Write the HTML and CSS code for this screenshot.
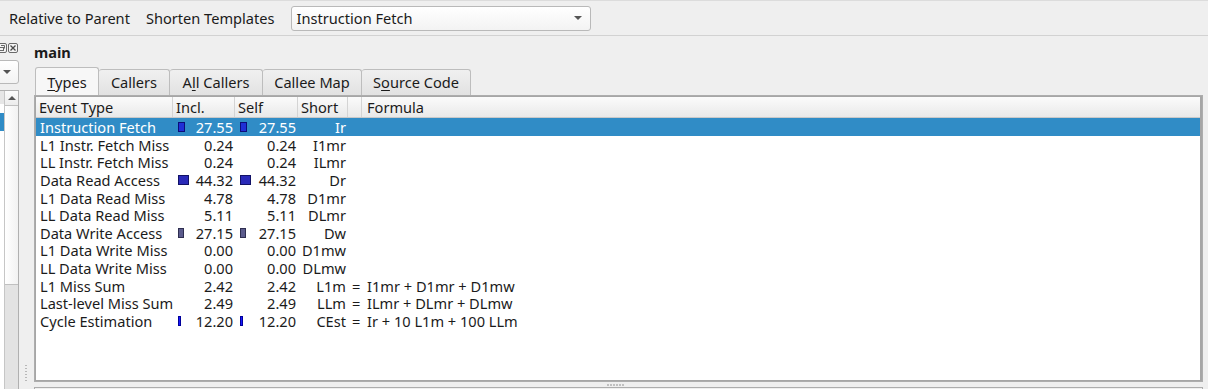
FILE: index.html
```html
<!DOCTYPE html>
<html lang="en">
<head>
    <meta charset="UTF-8">
    <title>Types - main</title>
    <link rel="stylesheet" href="styles.css">
</head>
<body>

    <!-- Top toolbar -->
    <div class="toolbar">
        <span class="tool-btn">Relative to Parent</span>
        <span class="tool-btn">Shorten Templates</span>
        <div class="combo">
            <span>Instruction Fetch</span>
            <span class="combo-arrow"></span>
        </div>
    </div>

    <div class="workspace">
        <!-- Left dock, mostly cut off -->
        <aside class="dock">
            <div class="dock-title">
                <svg class="dock-icon float" width="10" height="10" viewBox="0 0 10 10">
                    <rect x="0.5" y="0.5" width="9" height="9" rx="1.5" fill="#f4f4f4" stroke="#6a6a6a"/>
                    <rect x="2.5" y="4.5" width="4" height="3" fill="none" stroke="#6a6a6a"/>
                    <path d="M4 2.5h3.5v3" fill="none" stroke="#6a6a6a"/>
                </svg>
                <svg class="dock-icon" width="10" height="10" viewBox="0 0 10 10">
                    <rect x="0.5" y="0.5" width="9" height="9" rx="1.5" fill="#f4f4f4" stroke="#6a6a6a"/>
                    <path d="M2.5 2.5l5 5M7.5 2.5l-5 5" stroke="#4a4a4a" stroke-width="1.3"/>
                </svg>
            </div>
            <div class="dock-combo"><span class="combo-arrow"></span></div>
            <div class="dock-list">
                <div class="dock-rows">
                    <div class="dock-head"></div>
                    <div class="dock-sel"></div>
                </div>
                <div class="vscroll">
                    <div class="scroll-up"></div>
                    <div class="scroll-slider"></div>
                </div>
            </div>
        </aside>

        <div class="splitter-v"><span class="grip-v"></span></div>

        <main class="main">
            <div class="func-name">main</div>

            <div class="tabs">
                <span class="tab active"><u>T</u>ypes</span>
                <span class="tab">Callers</span>
                <span class="tab">A<u>l</u>l Callers</span>
                <span class="tab">Callee Map</span>
                <span class="tab">S<u>o</u>urce Code</span>
            </div>

            <div class="pane">
                <div class="tree">
                    <div class="row head">
                        <span>Event Type</span>
                        <span>Incl.</span>
                        <span>Self</span>
                        <span>Short</span>
                        <span></span>
                        <span>Formula</span>
                    </div>

                    <div class="row selected">
                        <span>Instruction Fetch</span>
                        <span class="num"><i class="bar ir" style="width: 7px"></i>27.55</span>
                        <span class="num"><i class="bar ir" style="width: 7px"></i>27.55</span>
                        <span class="short">Ir</span>
                        <span></span>
                        <span></span>
                    </div>
                    <div class="row">
                        <span>L1 Instr. Fetch Miss</span>
                        <span class="num">0.24</span>
                        <span class="num">0.24</span>
                        <span class="short">I1mr</span>
                        <span></span>
                        <span></span>
                    </div>
                    <div class="row">
                        <span>LL Instr. Fetch Miss</span>
                        <span class="num">0.24</span>
                        <span class="num">0.24</span>
                        <span class="short">ILmr</span>
                        <span></span>
                        <span></span>
                    </div>
                    <div class="row">
                        <span>Data Read Access</span>
                        <span class="num"><i class="bar dr" style="width: 11px"></i>44.32</span>
                        <span class="num"><i class="bar dr" style="width: 11px"></i>44.32</span>
                        <span class="short">Dr</span>
                        <span></span>
                        <span></span>
                    </div>
                    <div class="row">
                        <span>L1 Data Read Miss</span>
                        <span class="num">4.78</span>
                        <span class="num">4.78</span>
                        <span class="short">D1mr</span>
                        <span></span>
                        <span></span>
                    </div>
                    <div class="row">
                        <span>LL Data Read Miss</span>
                        <span class="num">5.11</span>
                        <span class="num">5.11</span>
                        <span class="short">DLmr</span>
                        <span></span>
                        <span></span>
                    </div>
                    <div class="row">
                        <span>Data Write Access</span>
                        <span class="num"><i class="bar dw" style="width: 6px"></i>27.15</span>
                        <span class="num"><i class="bar dw" style="width: 6px"></i>27.15</span>
                        <span class="short">Dw</span>
                        <span></span>
                        <span></span>
                    </div>
                    <div class="row">
                        <span>L1 Data Write Miss</span>
                        <span class="num">0.00</span>
                        <span class="num">0.00</span>
                        <span class="short">D1mw</span>
                        <span></span>
                        <span></span>
                    </div>
                    <div class="row">
                        <span>LL Data Write Miss</span>
                        <span class="num">0.00</span>
                        <span class="num">0.00</span>
                        <span class="short">DLmw</span>
                        <span></span>
                        <span></span>
                    </div>
                    <div class="row">
                        <span>L1 Miss Sum</span>
                        <span class="num">2.42</span>
                        <span class="num">2.42</span>
                        <span class="short">L1m</span>
                        <span class="eq">=</span>
                        <span>I1mr + D1mr + D1mw</span>
                    </div>
                    <div class="row">
                        <span>Last-level Miss Sum</span>
                        <span class="num">2.49</span>
                        <span class="num">2.49</span>
                        <span class="short">LLm</span>
                        <span class="eq">=</span>
                        <span>ILmr + DLmr + DLmw</span>
                    </div>
                    <div class="row">
                        <span>Cycle Estimation</span>
                        <span class="num"><i class="bar ce" style="width: 3px"></i>12.20</span>
                        <span class="num"><i class="bar ce" style="width: 3px"></i>12.20</span>
                        <span class="short">CEst</span>
                        <span class="eq">=</span>
                        <span>Ir + 10 L1m + 100 LLm</span>
                    </div>
                </div>
            </div>

            <div class="splitter-h"><span class="grip-h"></span></div>
            <div class="lower-pane"></div>
        </main>
    </div>

</body>
</html>
```

FILE: styles.css
```css
/* General page styling */
body {
    margin: 0;
    background: #efefef;
    color: #1b1b1b;
    font-family: "Noto Sans", "DejaVu Sans", sans-serif;
    font-size: 14.6px;
    overflow: hidden;
}

* {
    box-sizing: border-box;
}

/* Toolbar */
.toolbar {
    height: 36px;
    display: flex;
    align-items: center;
    border-top: 1px solid #dcdcdc;
    border-bottom: 1px solid #d2d2d2;
    padding-left: 9px;
}

.tool-btn {
    margin-right: 16px;
}

.combo {
    width: 300px;
    height: 25px;
    display: flex;
    align-items: center;
    justify-content: space-between;
    padding: 0 6px 0 5px;
    border: 1px solid #b9b9b9;
    border-radius: 3px;
    background: linear-gradient(#ffffff, #f3f3f3);
}

.combo-arrow {
    width: 0;
    height: 0;
    border-left: 4px solid transparent;
    border-right: 4px solid transparent;
    border-top: 4px solid #555555;
    margin-right: 2px;
}

/* Workspace */
.workspace {
    display: flex;
    height: 353px;
}

/* Left dock */
.dock {
    width: 19px;
    display: flex;
    flex-direction: column;
    overflow: hidden;
}

.dock-title {
    height: 24px;
    display: flex;
    align-items: center;
    gap: 1px;
    margin-left: -3px;
}

.dock-combo {
    height: 24px;
    margin: 0 0 0 -10px;
    border: 1px solid #b9b9b9;
    border-radius: 3px;
    background: linear-gradient(#ffffff, #f3f3f3);
    display: flex;
    align-items: center;
    justify-content: flex-end;
    padding-right: 5px;
}

.dock-list {
    flex: 1;
    margin-top: 6px;
    display: flex;
    border-right: 1px solid #b0b0b0;
    border-top: 1px solid #b0b0b0;
}

.dock-rows {
    width: 4px;
    background: #ffffff;
}

.dock-head {
    height: 13px;
    background: #e6e6e6;
}

.dock-sel {
    height: 18px;
    margin-top: 9px;
    background: #308cc6;
}

.vscroll {
    flex: 1;
    display: flex;
    flex-direction: column;
    background: #e3e3e3;
    border-left: 1px solid #c6c6c6;
}

.scroll-up {
    height: 15px;
    border-bottom: 1px solid #c0c0c0;
    background: linear-gradient(#fbfbfb, #ececec);
    position: relative;
}

.scroll-up::after {
    content: "";
    position: absolute;
    left: 3px;
    top: 5px;
    border-left: 4px solid transparent;
    border-right: 4px solid transparent;
    border-bottom: 4px solid #555555;
}

.scroll-slider {
    height: 179px;
    background: linear-gradient(90deg, #ffffff, #f2f2f2);
    border-bottom: 1px solid #c0c0c0;
}

/* Splitters */
.splitter-v {
    width: 15px;
    display: flex;
    justify-content: center;
    align-items: flex-end;
    padding-bottom: 8px;
}

.grip-v {
    width: 2px;
    height: 16px;
    background: repeating-linear-gradient(#b8b8b8 0 1px, transparent 1px 3px);
    margin-left: -2px;
}

.splitter-h {
    height: 5px;
    display: flex;
    justify-content: center;
    align-items: center;
}

.grip-h {
    width: 17px;
    height: 2px;
    background: repeating-linear-gradient(90deg, #c0c0c0 0 2px, transparent 2px 3px);
    margin-left: -8px;
}

/* Main area */
.main {
    width: 1170px;
    display: flex;
    flex-direction: column;
}

.func-name {
    height: 31px;
    line-height: 32px;
    font-weight: bold;
    padding-left: 0;
}

.tabs {
    height: 28px;
    display: flex;
    align-items: flex-end;
    padding-left: 1px;
}

.tab {
    height: 26px;
    line-height: 25px;
    padding: 0;
    border: 1px solid #bdbdbd;
    border-bottom: none;
    border-left: none;
    border-radius: 3px 3px 0 0;
    background: linear-gradient(#f0f0f0, #e2e2e2);
    text-align: center;
}

.tab:first-child {
    border-left: 1px solid #bdbdbd;
}

.tab.active {
    height: 28px;
    line-height: 29px;
    background: #f7f7f7;
    width: 64px;
}

.tab:nth-child(2) { width: 71px; }
.tab:nth-child(3) { width: 93px; }
.tab:nth-child(4) { width: 99px; }
.tab:nth-child(5) { width: 109px; }

.tab u {
    text-underline-offset: 2px;
}

/* Pane and tree */
.pane {
    height: 287px;
    border: 1px solid #adadad;
    background: #f7f7f7;
    width: 1169px;
}

.tree {
    height: 100%;
    border: 1px solid #a6a6a6;
    border-right-width: 2px;
    background: #ffffff;
    overflow: hidden;
}

.row {
    display: grid;
    grid-template-columns: 137px 62px 63px 50px 14px 1fr;
    height: 17.65px;
    line-height: 17.65px;
    padding-top: 1px;
    white-space: nowrap;
}

.row > span {
    padding-left: 3px;
}

.row > span:first-child {
    padding-left: 4px;
}

.row.head {
    height: 21px;
    line-height: 20px;
    padding-top: 0;
    background: linear-gradient(#fbfbfb, #e9e9e9);
    border-bottom: 1px solid #c9c9c9;
}

.row.head > span {
    border-right: 1px solid #d4d4d4;
    padding-left: 3px;
}

.row.head > span:last-child {
    border-right: none;
}

.row.selected {
    background: #308cc6;
    color: #ffffff;
}

.num {
    display: flex;
    align-items: center;
    justify-content: flex-end;
    padding-right: 2px;
    position: relative;
}

.short {
    text-align: right;
    padding-right: 2px;
}

.row > .eq {
    padding-left: 4px;
}

.row > span:last-child {
    padding-left: 5px;
}

/* Cost bars */
.bar {
    position: absolute;
    left: 5px;
    top: 3px;
    height: 10px;
    border: 1px solid #10105e;
}

.bar.ir { background: #1f2fd6; border-color: #0c0c7a; }
.bar.dr { background: #2a2ab8; border-color: #121266; }
.bar.dw { background: #5b5b8c; border-color: #2e2e50; }
.bar.ce { background: #1818ff; border-color: #00009a; }

.lower-pane {
    flex: 1;
    border: 1px solid #adadad;
    border-bottom: none;
    width: 1169px;
}
```
